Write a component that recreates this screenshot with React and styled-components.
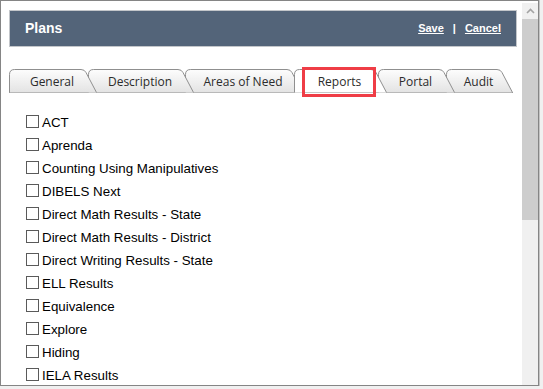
import React from "react";
import styled, { createGlobalStyle } from "styled-components";

const Global = createGlobalStyle`
  html, body { margin: 0; padding: 0; background: #f0f0f0; }
  body { font-family: "Liberation Sans", Arial, sans-serif; }
`;

const Frame = styled.div`
  box-sizing: border-box;
  width: 539px;
  height: 386px;
  border: 1px solid #858585;
  box-shadow: 1px 0 0 #c4c4c4;
  background: #fff;
  display: flex;
  overflow: hidden;
`;

const Main = styled.div`
  flex: 1;
  min-width: 0;
  padding: 9px 5px 0 8px;
  overflow: hidden;
`;

const Header = styled.div`
  box-sizing: border-box;
  height: 37px;
  background: #536479;
  border: 1px solid #c3c6ca;
  display: flex;
  align-items: center;
  justify-content: space-between;
  padding: 0 15px 1px 15px;
  color: #fff;
`;

const Title = styled.div`
  font-family: "Liberation Sans", Arial, sans-serif;
  font-weight: bold;
  font-size: 14px;
`;

const Actions = styled.div`
  display: flex;
  align-items: center;
  gap: 8px;
  font-family: "Liberation Sans", Arial, sans-serif;
  font-weight: bold;
  font-size: 11px;
`;

const ActionLink = styled.a`
  color: #fff;
  text-decoration: underline;
  cursor: pointer;
`;

const Sep = styled.span`
  padding: 0 1px;
`;

const TabStrip = styled.div`
  display: flex;
  margin-top: 22px;
  height: 23px;
  border-bottom: 1px solid #8f8f8f;
  width: 504px;
`;

const TabItem = styled.div`
  position: relative;
  box-sizing: border-box;
  flex: none;
  width: ${(p) => p.$w}px;
  height: 24px;
  margin-left: ${(p) => (p.$first ? 0 : -9)}px;
  z-index: ${(p) => p.$z};
  display: flex;
  align-items: center;
  justify-content: center;
  padding: 1px 11px 0 9px;
  font-family: "Open Sans", "Noto Sans", sans-serif;
  font-size: 12px;
  color: #2b2b2b;
  cursor: pointer;
`;

const TabShape = styled.svg`
  position: absolute;
  left: 0;
  top: 0;
  z-index: -1;
`;

const TabLabel = styled.span`
  position: relative;
  white-space: nowrap;
`;

const Highlight = styled.div`
  position: absolute;
  left: 8px;
  top: -2px;
  width: 74px;
  height: 30px;
  box-sizing: border-box;
  border: 3px solid #ef3d46;
  pointer-events: none;
`;

const List = styled.div`
  margin-top: 18px;
  padding-left: 17px;
  display: flex;
  flex-direction: column;
`;

const Row = styled.label`
  height: 23px;
  display: flex;
  align-items: center;
  gap: 3px;
  font-family: "Liberation Sans", Arial, sans-serif;
  font-size: 13.33px;
  color: #000;
  white-space: nowrap;
`;

const Box = styled.span`
  box-sizing: border-box;
  width: 13px;
  height: 13px;
  border: 1px solid #5a5a5a;
  background: #fff;
  margin-top: -2px;
  flex: none;
`;

const Scrollbar = styled.div`
  width: 16px;
  flex: none;
  margin-top: 2px;
  background: #f0f0f0;
  display: flex;
  flex-direction: column;
`;

const ArrowBtn = styled.div`
  height: 16px;
  display: flex;
  align-items: center;
  justify-content: center;
`;

const Thumb = styled.div`
  height: 201px;
  background: #cdcdcd;
`;

const tabs = [
  { label: "General", w: 88 },
  { label: "Description", w: 106 },
  { label: "Areas of Need", w: 118 },
  { label: "Reports", w: 93, active: true },
  { label: "Portal", w: 77 },
  { label: "Audit", w: 67 },
];

const items = [
  "ACT",
  "Aprenda",
  "Counting Using Manipulatives",
  "DIBELS Next",
  "Direct Math Results - State",
  "Direct Math Results - District",
  "Direct Writing Results - State",
  "ELL Results",
  "Equivalence",
  "Explore",
  "Hiding",
  "IELA Results",
];

function tabPath(w, h) {
  const b = h + 0.5;
  return `M0.5 ${b} L0.5 5.5 Q0.5 0.5 5.5 0.5 L${w - 16} 0.5 Q${w - 12.5} 0.5 ${w - 11} 3.5 L${w - 0.5} ${b}`;
}

function Tab({ tab, index }) {
  const h = 23;
  const id = `tabgrad${index}`;
  return (
    <TabItem $w={tab.w} $first={index === 0} $z={tab.active ? 10 : 8 - index}>
      <TabShape width={tab.w} height={h + 1} viewBox={`0 0 ${tab.w} ${h + 1}`}>
        <defs>
          <linearGradient id={id} x1="0" y1="0" x2="0" y2="1">
            <stop offset="0" stopColor="#fdfdfd" />
            <stop offset="1" stopColor="#e3e3e3" />
          </linearGradient>
        </defs>
        <path
          d={tabPath(tab.w, h)}
          fill={tab.active ? "#fff" : `url(#${id})`}
          stroke="#8f8f8f"
          strokeWidth="1"
        />
      </TabShape>
      <TabLabel>{tab.label}</TabLabel>
      {tab.active && <Highlight />}
    </TabItem>
  );
}

export default function App() {
  return (
    <>
      <Global />
      <Frame>
        <Main>
          <Header>
            <Title>Plans</Title>
            <Actions>
              <ActionLink>Save</ActionLink>
              <Sep>|</Sep>
              <ActionLink>Cancel</ActionLink>
            </Actions>
          </Header>
          <TabStrip>
            {tabs.map((t, i) => (
              <Tab key={t.label} tab={t} index={i} />
            ))}
          </TabStrip>
          <List>
            {items.map((it) => (
              <Row key={it}>
                <Box />
                {it}
              </Row>
            ))}
          </List>
        </Main>
        <Scrollbar>
          <ArrowBtn>
            <svg width="9" height="6" viewBox="0 0 9 6">
              <path d="M1 5 L4.5 1.5 L8 5" fill="none" stroke="#a3a3a3" strokeWidth="1.6" />
            </svg>
          </ArrowBtn>
          <Thumb />
        </Scrollbar>
      </Frame>
    </>
  );
}
